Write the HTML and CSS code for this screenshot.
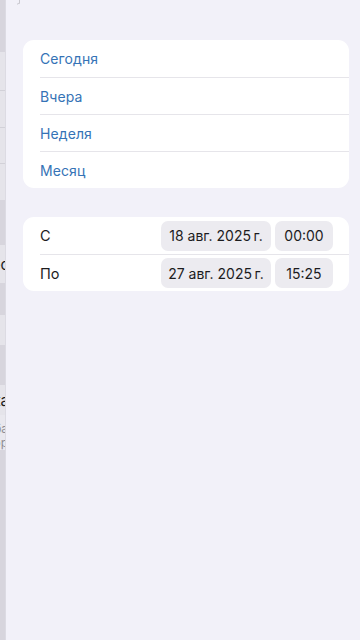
FILE: index.html
```html
<!DOCTYPE html>
<html lang="ru">
<head>
<meta charset="utf-8">
<title>Период</title>
<link rel="stylesheet" href="styles.css">
</head>
<body>
<div class="screen">
  <div class="under">
    <div class="blk dark h52"></div>
    <div class="blk light h38"></div>
    <div class="blk light h37 top-line"></div>
    <div class="blk light h36 top-line"></div>
    <div class="blk light h37 top-line"></div>
    <div class="blk dark h45"></div>
    <div class="blk light h38 txt"><span class="g">ес</span></div>
    <div class="blk dark h32"></div>
    <div class="blk light h30"></div>
    <div class="blk dark h40"></div>
    <div class="blk light h30 txt"><span class="g">ка</span></div>
    <div class="blk pale h35 txt2"><span class="g2">ба</span><span class="g2">ор</span></div>
    <div class="blk dark fill"></div>
  </div>
  <div class="sheet">
    <div class="topmark"></div>
    <div class="card">
      <div class="row link">Сегодня</div>
      <div class="row link">Вчера</div>
      <div class="row link">Неделя</div>
      <div class="row link">Месяц</div>
    </div>
    <div class="card">
      <div class="row field">
        <span class="label">С</span>
        <span class="pills"><span class="pill date">18 авг. 2025&#8239;г.</span><span class="pill time">00:00</span></span>
      </div>
      <div class="row field">
        <span class="label">По</span>
        <span class="pills"><span class="pill date">27 авг. 2025&#8239;г.</span><span class="pill time">15:25</span></span>
      </div>
    </div>
  </div>
</div>
</body>
</html>
```

FILE: styles.css
```css
* { box-sizing: border-box; }
html, body { margin: 0; padding: 0; }
body {
  width: 360px;
  height: 640px;
  overflow: hidden;
  font-family: Inter, "Noto Sans", "Liberation Sans", sans-serif;
  background: #f2f1f9;
}
.screen {
  display: flex;
  width: 360px;
  height: 640px;
}
.under {
  width: 6px;
  flex: none;
  display: flex;
  flex-direction: column;
  overflow: hidden;
  background: #d6d5dc;
  border-right: 1px solid #dcdbe3;
}
.blk { flex: none; display: flex; justify-content: flex-end; overflow: hidden; }
.dark { background: #d7d5dd; }
.light { background: #e5e4ea; }
.pale { background: #e9e8ee; }
.top-line { border-top: 1px solid #d2d1d8; }
.h52 { height: 52px; }
.h38 { height: 38px; }
.h37 { height: 37px; }
.h36 { height: 36px; }
.h45 { height: 45px; }
.h32 { height: 32px; }
.h30 { height: 30px; }
.h40 { height: 40px; }
.h35 { height: 35px; }
.fill { flex: 1; }
.txt { align-items: center; }
.g {
  font-size: 15px;
  color: #1c1c1e;
  white-space: nowrap;
  margin-right: -4px;
}
.txt2 { flex-direction: column; align-items: flex-end; padding-top: 2px; }
.g2 {
  font-size: 12px;
  line-height: 14px;
  color: #8e8d94;
  white-space: nowrap;
  margin-right: -3px;
}
.sheet {
  flex: 1;
  display: flex;
  flex-direction: column;
  gap: 29px;
  padding: 40px 11px 0 17px;
  position: relative;
}
.topmark {
  position: absolute;
  left: 11px;
  top: 0;
  width: 3px;
  height: 4px;
  border-right: 1.5px solid #c9c8cf;
  border-bottom: 1.5px solid #c9c8cf;
  transform: skewY(-30deg);
}
.card {
  background: #ffffff;
  border-radius: 11px;
  padding-left: 17px;
  overflow: hidden;
}
.row {
  height: 37px;
  display: flex;
  align-items: center;
  font-size: 14px;
  border-top: 1px solid #e6e5ea;
}
.row:first-child { border-top: none; height: 37px; }
.link { color: #3573b6; letter-spacing: 0.1px; }
.field { justify-content: space-between; padding-right: 16px; color: #1c1c1e; }
.label { font-size: 14.5px; }
.pills { display: flex; gap: 4px; }
.pill {
  height: 30px;
  display: flex;
  align-items: center;
  justify-content: center;
  background: #ecebf0;
  border-radius: 7px;
  font-size: 14px;
  color: #1c1c1e;
}
.date { width: 110px; }
.time { width: 58px; }
```
